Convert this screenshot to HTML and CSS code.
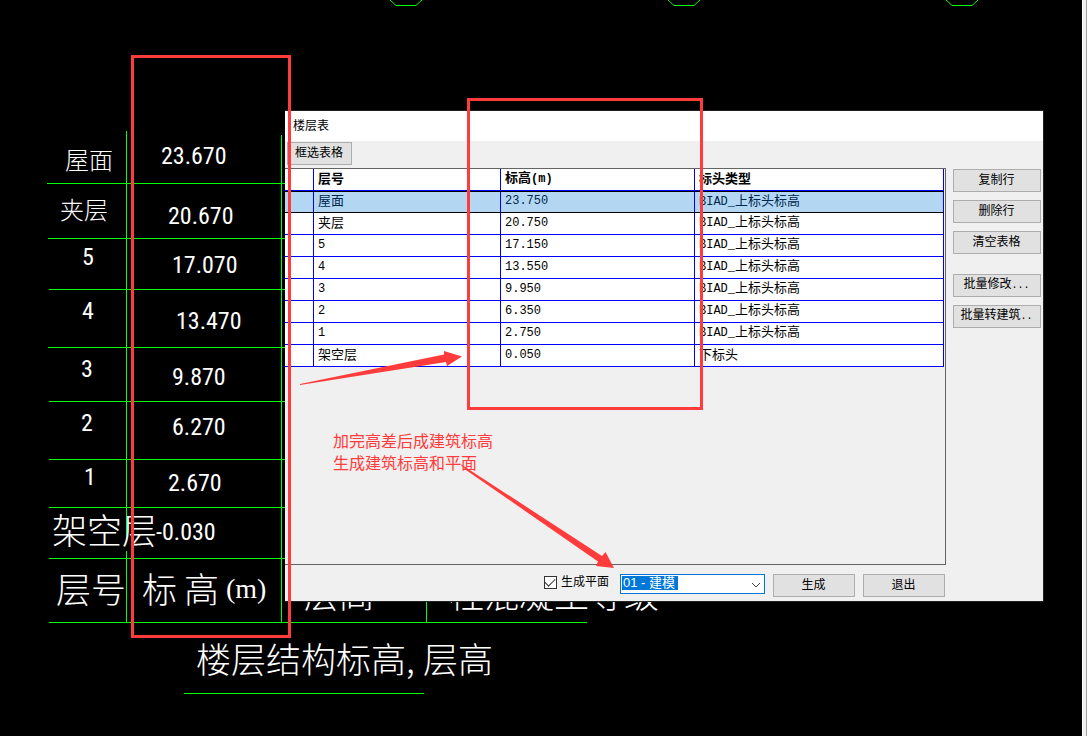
FILE: index.html
```html
<!DOCTYPE html>
<html lang="zh-CN">
<head>
<meta charset="utf-8">
<title>楼层表</title>
<link rel="stylesheet" href="styles.css">
</head>
<body>
<main class="stage">
  <svg class="drawing" width="1082" height="736" viewBox="0 0 1082 736">
    <g class="cad-lines">
      <path d="M389 -1L396 5.500H416L423 -1M667 -1L674 5.500H694L701 -1M945 -1L952 5.500H972L979 -1"/>
      <path d="M126.500 131V541M126.500 551V622M281.500 135V622M426.500 595V622"/>
      <path d="M47 183.500H300M48 238.500H300M49 289.500H300M48 347.500H300M49 401.500H300M49 459.500H300M49 507.500H300M49 558.500H300M49 622.500H587M184 693.500H424"/>
    </g>
    <g class="cad-small">
      <text x="65" y="169">屋面</text>
      <text x="60" y="219">夹层</text>
    </g>
    <g class="cad-number">
      <text x="82" y="265">5</text>
      <text x="82" y="319">4</text>
      <text x="81" y="377">3</text>
      <text x="81" y="431">2</text>
      <text x="84" y="485">1</text>
      <text x="161" y="164">23.670</text>
      <text x="168" y="224">20.670</text>
      <text x="172" y="273">17.070</text>
      <text x="176" y="329">13.470</text>
      <text x="172" y="385">9.870</text>
      <text x="172" y="435">6.270</text>
      <text x="168" y="491">2.670</text>
      <text x="156" y="540">-0.030</text>
    </g>
    <g class="cad-large">
      <text x="52" y="544">架空层</text>
      <text x="56" y="603">层号</text>
      <text x="142" y="603">标<tspan x="184">高</tspan><tspan class="cad-unit" x="226" y="598">(m)</tspan></text>
      <text x="304" y="608">层高</text>
      <text x="449" y="608">柱混凝土等级</text>
      <text x="196" y="673">楼层结构标高,<tspan x="423">层高</tspan></text>
    </g>
  </svg>

  <section class="dialog" aria-labelledby="dialog-title">
    <h1 class="dialog-title" id="dialog-title">楼层表</h1>
    <div class="toolbar"><button class="btn btn-pick" type="button">框选表格</button></div>
    <div class="dialog-body">
      <div class="grid-panel">
        <table class="levels">
          <colgroup><col class="col-mark"><col class="col-floor"><col class="col-level"><col class="col-type"></colgroup>
          <thead><tr><th></th><th>层号</th><th>标高<span class="mono">(m)</span></th><th>标头类型</th></tr></thead>
          <tbody>
            <tr class="selected"><td></td><td>屋面</td><td class="mono">23.750</td><td><span class="mono">BIAD_</span>上标头标高</td></tr>
            <tr><td></td><td>夹层</td><td class="mono">20.750</td><td><span class="mono">BIAD_</span>上标头标高</td></tr>
            <tr><td></td><td class="mono">5</td><td class="mono">17.150</td><td><span class="mono">BIAD_</span>上标头标高</td></tr>
            <tr><td></td><td class="mono">4</td><td class="mono">13.550</td><td><span class="mono">BIAD_</span>上标头标高</td></tr>
            <tr><td></td><td class="mono">3</td><td class="mono">9.950</td><td><span class="mono">BIAD_</span>上标头标高</td></tr>
            <tr><td></td><td class="mono">2</td><td class="mono">6.350</td><td><span class="mono">BIAD_</span>上标头标高</td></tr>
            <tr><td></td><td class="mono">1</td><td class="mono">2.750</td><td><span class="mono">BIAD_</span>上标头标高</td></tr>
            <tr><td></td><td>架空层</td><td class="mono">0.050</td><td>下标头</td></tr>
          </tbody>
        </table>
      </div>
      <div class="side">
        <button class="btn" type="button">复制行</button>
        <button class="btn" type="button">删除行</button>
        <button class="btn" type="button">清空表格</button>
        <button class="btn btn-group" type="button">批量修改<span class="mono">...</span></button>
        <button class="btn" type="button">批量转建筑<span class="mono">..</span></button>
      </div>
    </div>
    <div class="footer">
      <label class="check"><input type="checkbox" checked>生成平面</label>
      <div class="combo">
        <select aria-label="平面类型"><option>01 - 建模</option></select>
        <svg class="chevron" width="10" height="6" viewBox="0 0 10 6"><path d="M1 1L5 5L9 1"/></svg>
      </div>
      <button class="btn btn-action" type="button">生成</button>
      <button class="btn btn-action" type="button">退出</button>
    </div>
  </section>

  <svg class="markup" width="1082" height="736" viewBox="0 0 1082 736">
    <rect x="132.500" y="56.500" width="157" height="580"/>
    <rect x="468.500" y="99.500" width="233" height="309"/>
    <path d="M300 384L444 354.500L444 351L462 356.500L447 366L446 362L300 385Z"/>
    <path d="M459 463L602 556L605.500 552L614 568L596 566L598 561.500L466 470Z"/>
  </svg>
  <p class="note">加完高差后成建筑标高<br>生成建筑标高和平面</p>
</main>
<div class="edge"></div>
</body>
</html>
```

FILE: styles.css
```css
* { box-sizing: border-box; }

body {
  margin: 0;
  display: flex;
  min-height: 100vh;
  background: #000;
  color: #000;
  font: 12px/16px "Liberation Sans", "Noto Sans CJK SC", sans-serif;
}

.stage {
  position: relative;
  flex: 1;
  min-width: 0;
  overflow: hidden;
}

.edge {
  width: 5px;
  background: #f0eeee;
  border-left: 1px solid #fff;
  border-right: 1px solid #a0a0a0;
}

.drawing { display: block; }
.cad-lines { fill: none; stroke: #00ff00; stroke-width: 1; }
.cad-small, .cad-number, .cad-large { fill: #fff; }
.cad-small { font: 300 24px "Noto Sans CJK SC", sans-serif; }
.cad-number { font: 24px "Roboto Condensed", "Liberation Sans", sans-serif; }
.cad-large { font: 300 35px "Noto Sans CJK SC", sans-serif; }
.cad-unit { font: 28px "Liberation Serif", serif; }

.dialog {
  position: absolute;
  left: 285px;
  top: 110px;
  width: 759px;
  background: #f0f0f0;
  border: 1px solid #222;
  border-left: 0;
}

.dialog-title {
  margin: 0;
  height: 30px;
  padding-left: 8px;
  background: #fff;
  font-size: 12px;
  line-height: 30px;
  font-weight: 400;
}

.btn {
  display: block;
  height: 23px;
  padding: 0 1px 2px 0;
  border: 1px solid #adadad;
  border-radius: 0;
  background: #e1e1e1;
  color: #000;
  font: inherit;
  line-height: 18px;
  white-space: nowrap;
}

.mono { font-family: "Liberation Mono", monospace; font-size: 12px; }

.toolbar { padding: 1px 0 3px 2px; }
.btn-pick { width: 65px; }

.dialog-body {
  display: flex;
  gap: 7px;
  padding-right: 2px;
}

.grid-panel {
  flex: 1;
  min-height: 397px;
  padding-right: 1px;
  border: 1px solid #646464;
  border-left: 0;
}

.levels {
  width: 100%;
  table-layout: fixed;
  border-collapse: separate;
  border-spacing: 0;
  background: #fff;
  font-size: 13px;
  line-height: 16px;
}

.col-mark { width: 29px; }
.col-floor { width: 187px; }
.col-level { width: 194px; }

.levels th, .levels td {
  height: 22px;
  padding: 0 0 2px 4px;
  border-right: 1px solid #00f;
  border-bottom: 1px solid #00f;
  text-align: left;
  white-space: nowrap;
}

.levels th { font-weight: 700; }

.levels .selected td {
  border-top: 1px solid #000;
  border-bottom-color: #000;
  background: #b3d7f3;
  color: #00284d;
}

.side {
  display: flex;
  flex-direction: column;
  gap: 8px;
  width: 88px;
  padding-top: 1px;
}

.btn-group { margin-top: 12px; }
.side .mono { font-size: 10px; }

.footer {
  display: flex;
  justify-content: flex-end;
  align-items: flex-start;
  gap: 8px;
  padding: 9px 98px 4px 0;
}

.footer .btn-action { width: 82px; }

.check {
  display: flex;
  align-items: center;
  gap: 4px;
  padding-right: 3px;
}

.check input {
  appearance: none;
  width: 13px;
  height: 13px;
  margin: 0;
  border: 1px solid #333;
  background: #fff;
  display: grid;
  place-items: center;
}

.check input:checked::before {
  content: "";
  width: 9px;
  height: 5px;
  margin-bottom: 3px;
  border: solid #333;
  border-width: 0 0 1px 1px;
  transform: rotate(-45deg);
}

.combo { position: relative; width: 145px; }

.combo select {
  appearance: none;
  display: block;
  width: 100%;
  height: 20px;
  padding: 0 20px 2px 2px;
  border: 1px solid #0078d7;
  border-radius: 0;
  background: linear-gradient(#0078d7, #0078d7) 1px 1px / 56px 14px no-repeat #fff;
  color: #fff;
  font: inherit;
  font-size: 13px;
}

.chevron {
  position: absolute;
  right: 4px;
  top: 8px;
  fill: none;
  stroke: #444;
  pointer-events: none;
}

.markup {
  position: absolute;
  left: 0;
  top: 0;
  pointer-events: none;
}

.markup rect { fill: none; stroke: #ff3b3b; stroke-width: 3; }
.markup path { fill: #ff3b3b; }

.note {
  position: absolute;
  left: 333px;
  top: 429px;
  margin: 0;
  color: #ff3b3b;
  font: 16px/22px "Noto Sans CJK SC", sans-serif;
}
```
